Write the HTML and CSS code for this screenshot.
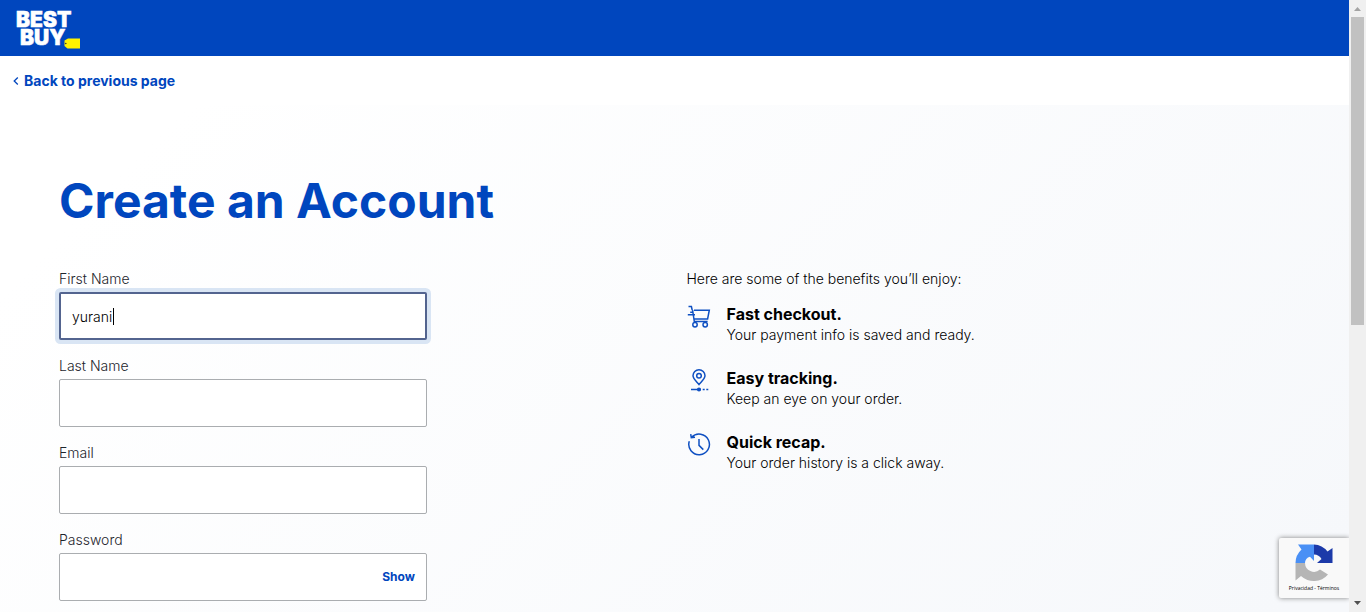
FILE: index.html
```html
<!DOCTYPE html>
<html lang="en">
<head>
<meta charset="utf-8">
<title>Create an Account - Best Buy</title>
<link rel="stylesheet" href="styles.css">
</head>
<body>
<div class="page">
  <header class="header">
    <a class="logo" href="#" aria-label="Best Buy">
      <svg width="68" height="40" viewBox="0 0 68 40">
        <g class="logo-text">
          <text x="2" y="19">BEST</text>
          <text x="6" y="37">BUY</text>
        </g>
        <path fill="#fff200" d="M50.500 32.500 54 30.500H66V40.500H53.500L50.500 38Z"/>
        <circle cx="51.800" cy="35.500" r=".8" fill="#333"/>
      </svg>
    </a>
  </header>
  <nav class="back">
    <a class="back-link" href="#">
      <svg width="6" height="8" viewBox="0 0 6 8" fill="none" stroke="currentColor" stroke-width="1.300"><path d="M4.800.5 1.200 4l3.600 3.500"/></svg>
      Back to previous page
    </a>
  </nav>
  <main class="main">
    <h1 class="title">Create an Account</h1>
    <div class="columns">
      <form class="form">
        <div class="field">
          <label for="first">First Name</label>
          <div class="control">
            <input class="input input-active" id="first" type="text" value="yurani">
            <span class="caret"></span>
          </div>
        </div>
        <div class="field">
          <label for="last">Last Name</label>
          <input class="input" id="last" type="text">
        </div>
        <div class="field">
          <label for="email">Email</label>
          <input class="input" id="email" type="email">
        </div>
        <div class="field">
          <label for="password">Password</label>
          <div class="control">
            <input class="input" id="password" type="password">
            <button class="show" type="button">Show</button>
          </div>
        </div>
      </form>
      <section class="benefits">
        <p class="intro">Here are some of the benefits you’ll enjoy:</p>
        <ul class="list">
          <li class="benefit">
            <svg class="icon" viewBox="0 0 24 24">
              <path d="M1.500 1.600H4.400L5.200 5.200M7 5.200H22.300L20.600 14H6.600M.8 9.700H8M3.200 7.200H5.600M5.600 5.200 7.300 16.500H20.600"/>
              <circle cx="8" cy="19.800" r="2.200"/><circle cx="18.200" cy="19.800" r="2.200"/>
            </svg>
            <div><h2>Fast checkout.</h2><p>Your payment info is saved and ready.</p></div>
          </li>
          <li class="benefit">
            <svg class="icon" viewBox="0 0 24 24">
              <path d="M12 15.500C8.500 11.500 6 9.500 6 6.800a6 6 0 0 1 12 0c0 2.700-2.500 4.700-6 8.700Z"/>
              <circle cx="12" cy="6.800" r="2.300"/>
              <path d="M4 20.500H14M15.700 20.500h2M19.300 20.500h2"/><circle class="dot" cx="12" cy="20.500" r="1.300"/>
            </svg>
            <div><h2>Easy tracking.</h2><p>Keep an eye on your order.</p></div>
          </li>
          <li class="benefit">
            <svg class="icon" viewBox="0 0 24 24">
              <path d="M4.600 4.300A10.300 10.300 0 1 1 2.300 8.200M3.700 1.200 4.300 4.600 8 4.200M12 6V12.400L16.300 16.600"/>
            </svg>
            <div><h2>Quick recap.</h2><p>Your order history is a click away.</p></div>
          </li>
        </ul>
      </section>
    </div>
  </main>
  <aside class="captcha">
    <svg width="38" height="38" viewBox="0 0 38 38">
      <path fill="#b5b5b5" d="M.5 19H10A9 9 0 0 0 25 25.500L33 30.500A18.600 18.600 0 0 1 6 32L.5 36.500Z"/>
      <path fill="#4a90f5" d="M19 .5V17L15 12.800a6 6 0 0 0-5 6.200H.5A18.500 18.500 0 0 1 6.500 5.500L3 .5Z"/>
      <path fill="#1c3aa9" d="M19 .5A18.500 18.500 0 0 1 32.500 7.500L37.500 4V19H22L26.500 15A9 9 0 0 0 19 10.500Z"/>
    </svg>
    <div class="terms"><a href="#">Privacidad</a> - <a href="#">Términos</a></div>
  </aside>
</div>
<div class="scrollbar" aria-hidden="true">
  <svg width="7" height="4" viewBox="0 0 7 4"><path fill="#a3a3a3" d="M0 4 3.500 0 7 4Z"/></svg>
  <div class="track"><div class="thumb"></div></div>
  <svg width="7" height="4" viewBox="0 0 7 4"><path fill="#505050" d="M0 0H7L3.500 4Z"/></svg>
</div>
</body>
</html>
```
FILE: styles.css
```css
* { box-sizing: border-box; }
body {
  margin: 0;
  height: 100vh;
  display: flex;
  overflow: hidden;
  font: 300 14px/20px Inter, "Liberation Sans", sans-serif;
  color: #000;
  background: #fff;
}
h1, h2, p, ul { margin: 0; padding: 0; }
a { color: inherit; text-decoration: none; }

.page {
  flex: 1;
  min-width: 0;
  display: flex;
  flex-direction: column;
  position: relative;
  overflow: hidden;
}
.header { flex: none; background: #0046be; padding: 8px 14px; }
.logo { display: block; height: 40px; }
.logo svg { display: block; overflow: visible; }
.logo-text {
  font-size: 21px;
  font-weight: 900;
  fill: #fff;
  stroke: #fff;
  stroke-width: 0.5;
}

.back { flex: none; display: flex; padding: 15px 13px 14px; }
.back-link {
  display: flex;
  align-items: center;
  gap: 5px;
  color: #0046be;
  font-weight: 700;
}

.main {
  flex: none;
  padding: 64px 59px 40px;
  background: linear-gradient(135deg, #fff 10%, #f6f8fb 95%);
}
.title {
  font-size: 48px;
  line-height: 64px;
  font-weight: 700;
  color: #0046be;
}
.columns {
  display: grid;
  grid-template-columns: 1fr 1fr;
  gap: 24px;
  padding-top: 36px;
}
.form { display: flex; flex-direction: column; gap: 16px; max-width: 368px; }
.field { display: flex; flex-direction: column; gap: 3px; }
.field label { color: #1d252c; }
.control { position: relative; display: flex; }
.input {
  width: 100%;
  height: 48px;
  padding: 0 12px;
  border: 1px solid #aaadb0;
  border-radius: 2px;
  background: #fff;
  font: inherit;
  color: #000;
  outline: none;
}
.input-active {
  border: 2px solid #53648f;
  padding: 0 11px;
  box-shadow: 0 0 0 4px #d9e5f4;
}
.caret {
  position: absolute;
  left: 54px;
  top: 16px;
  width: 1px;
  height: 17px;
  background: #000;
}
.show {
  position: absolute;
  right: 12px;
  top: 14px;
  padding: 0;
  border: 0;
  background: none;
  font: 700 12px/20px Inter, sans-serif;
  color: #0046be;
}

.list { list-style: none; padding-top: 14px; display: flex; flex-direction: column; gap: 22px; }
.benefit { display: flex; gap: 16px; }
.benefit h2 { font-size: 16px; line-height: 22px; font-weight: 700; }
.benefit p { line-height: 20px; }
.icon { width: 24px; height: 24px; margin-top: 2px; flex: none; fill: none; stroke: #0f50c2; stroke-width: 1.5; }
.dot { fill: #0f50c2; }

.captcha {
  position: absolute;
  right: 0;
  bottom: 14px;
  width: 70px;
  height: 60px;
  padding-top: 6px;
  border-radius: 2px 0 0 2px;
  background: #f9f9f9;
  box-shadow: 0 0 5px #808080;
  display: flex;
  flex-direction: column;
  align-items: center;
}
.terms { font: 400 5px/12px "Open Sans", sans-serif; }

.scrollbar {
  flex: none;
  width: 17px;
  padding: 7px 0;
  background: #f0f0f0;
  display: flex;
  flex-direction: column;
  align-items: center;
  gap: 6px;
}
.track { flex: 1; width: 13px; }
.thumb { height: 53.3%; background: #c1c1c1; }
```
